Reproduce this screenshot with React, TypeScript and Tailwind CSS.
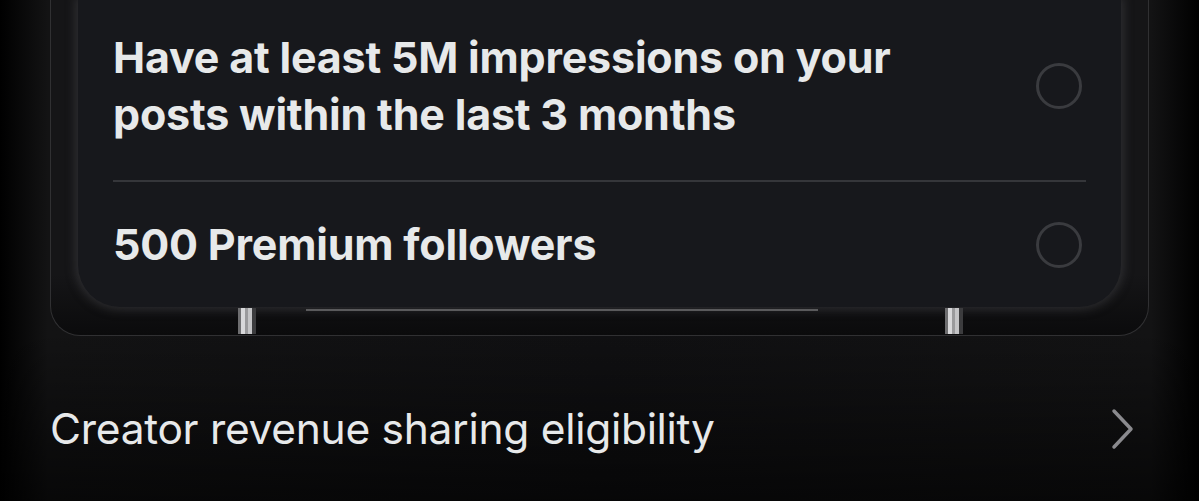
function Circle() {
  return <div className="h-[46px] w-[46px] shrink-0 rounded-full border-[3px] border-[#3a3b3f]" />;
}

function Metal() {
  return (
    <div className="flex h-[26px] w-[18px]">
      <div className="w-[3px] bg-[#6e6e70]" />
      <div className="w-[4px] bg-[#d8d8da]" />
      <div className="w-[3px] bg-[#9a9a9c]" />
      <div className="w-[4px] bg-[#c4c4c6]" />
      <div className="w-[4px] bg-[#3c3c3e]" />
    </div>
  );
}

export default function App() {
  return (
    <div className="h-[501px] w-[1199px] overflow-hidden bg-[linear-gradient(180deg,rgba(0,0,0,0)_0%,rgba(0,0,0,0)_66%,rgba(0,0,0,0.6)_100%),linear-gradient(90deg,#000_0%,#131314_4%,#101012_50%,#131314_96%,#000_100%)] font-['Inter',sans-serif] text-[#e7e9ea]">
      <div className="relative mx-[50px] rounded-b-[30px] border border-t-0 border-[#303032] bg-[linear-gradient(180deg,#151517_0%,#151517_82%,#0b0b0c_100%)] px-[27px] pb-[28px]">
        <div className="rounded-b-[42px] bg-[#17181c] px-[35px] shadow-[0_0_10px_3px_rgba(70,70,74,0.5)]">
          <div className="flex items-center justify-between pb-[37px] pt-[29px]">
            <p className="text-[43px] font-bold leading-[57px] tracking-[-0.2px]">
              Have at least 5M impressions on your
              <br />
              posts within the last 3 months
            </p>
            <div className="mr-[4px]">
              <Circle />
            </div>
          </div>
          <div className="h-[2px] bg-[#35363a]" />
          <div className="flex items-center justify-between pb-[34px] pt-[34px]">
            <p className="text-[43px] font-bold leading-[57px] tracking-[-0.2px]">500 Premium followers</p>
            <div className="mr-[4px]">
              <Circle />
            </div>
          </div>
        </div>
        <div className="absolute bottom-[1px] left-[187px]">
          <Metal />
        </div>
        <div className="absolute bottom-[1px] left-[894px]">
          <Metal />
        </div>
        <div className="absolute bottom-[24px] left-[255px] h-[2px] w-[512px] bg-[#5a5a5c]" />
      </div>
      <div className="flex items-center justify-between pl-[50px] pr-[64px] pt-[65px]">
        <p className="text-[42.5px] font-normal leading-[56px] tracking-[-0.3px]">Creator revenue sharing eligibility</p>
        <svg width="24" height="42" viewBox="0 0 24 42" fill="none">
          <path d="M3 3 L20 21 L3 39" stroke="#8a8a8e" strokeWidth="3.5" strokeLinecap="round" strokeLinejoin="round" />
        </svg>
      </div>
    </div>
  );
}
